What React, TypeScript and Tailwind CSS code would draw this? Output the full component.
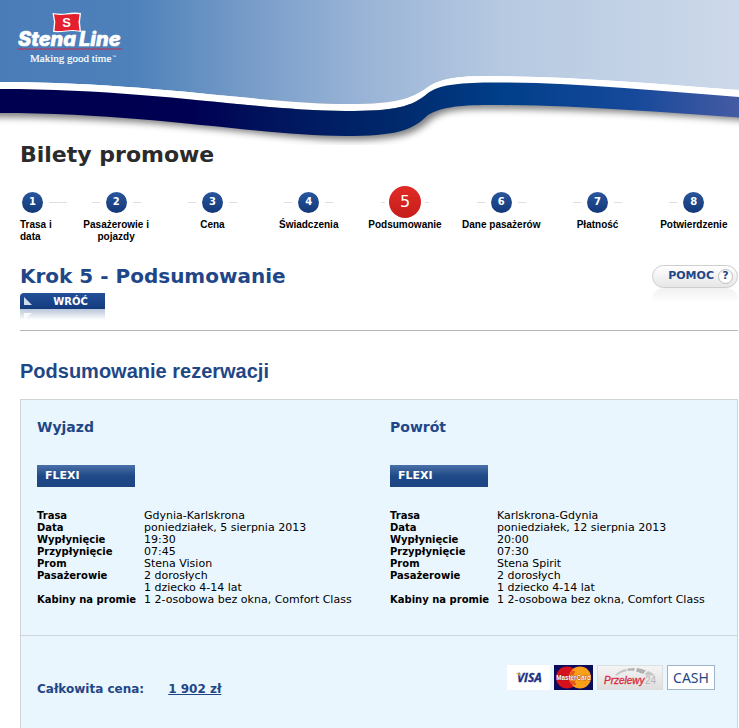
import clsx from 'clsx';

interface Step {
  label: string;
  active?: boolean;
}

interface Trip {
  title: string;
  fare: string;
  rows: [string, string[]][];
}

const steps: Step[] = [
  { label: 'Trasa i data' },
  { label: 'Pasażerowie i pojazdy' },
  { label: 'Cena' },
  { label: 'Świadczenia' },
  { label: 'Podsumowanie', active: true },
  { label: 'Dane pasażerów' },
  { label: 'Płatność' },
  { label: 'Potwierdzenie' },
];

const trips: Trip[] = [
  {
    title: 'Wyjazd',
    fare: 'FLEXI',
    rows: [
      ['Trasa', ['Gdynia-Karlskrona']],
      ['Data', ['poniedziałek, 5 sierpnia 2013']],
      ['Wypłynięcie', ['19:30']],
      ['Przypłynięcie', ['07:45']],
      ['Prom', ['Stena Vision']],
      ['Pasażerowie', ['2 dorosłych', '1 dziecko 4-14 lat']],
      ['Kabiny na promie', ['1 2-osobowa bez okna, Comfort Class']],
    ],
  },
  {
    title: 'Powrót',
    fare: 'FLEXI',
    rows: [
      ['Trasa', ['Karlskrona-Gdynia']],
      ['Data', ['poniedziałek, 12 sierpnia 2013']],
      ['Wypłynięcie', ['20:00']],
      ['Przypłynięcie', ['07:30']],
      ['Prom', ['Stena Spirit']],
      ['Pasażerowie', ['2 dorosłych', '1 dziecko 4-14 lat']],
      ['Kabiny na promie', ['1 2-osobowa bez okna, Comfort Class']],
    ],
  },
];

const Logo = () => (
  <svg className="absolute left-4 top-3 h-14 w-[112px]" viewBox="16 12 112 56" role="img" aria-label="Stena Line">
    <path d="M52.500 13Q60 14.500 67 13.300T81 13L80 22L81 32Q73 30.500 66 31.500T53 32L54 22Z" fill="#fff" />
    <path d="M54 14.300Q60 15.500 67 14.500T79.500 14.300L78.500 22L79.500 30.700Q73 29.500 66 30.500T54.500 30.700L55.300 22Z" fill="#e5202e" />
    <text x="66.500" y="27" textAnchor="middle" fontSize="13" fontWeight="bold" fill="#fff" fontFamily="'Liberation Sans', Arial, sans-serif">S</text>
    <text x="18" y="46" fontSize="20" fontWeight="800" fontStyle="italic" fill="#fff" stroke="#fff" strokeWidth="0.6" fontFamily="'Inter', sans-serif">Stena</text>
    <text x="79" y="46" fontSize="20" fontWeight="800" fontStyle="italic" fill="#fff" stroke="#fff" strokeWidth="0.6" fontFamily="'Inter', sans-serif">Line</text>
    <rect x="18" y="48.500" width="104" height="1" fill="#c8284a" />
    <text x="30" y="62" fontSize="11" fill="#fff" stroke="#fff" strokeWidth="0.2" fontFamily="'Liberation Serif', 'Times New Roman', serif">Making good time</text>
    <text x="112" y="58" fontSize="4" fill="#fff" fontFamily="'Liberation Sans', Arial, sans-serif">™</text>
  </svg>
);

const Header = () => (
  <header className="relative h-[145px]">
    <svg className="h-full w-full" viewBox="0 0 739 145" preserveAspectRatio="none" aria-hidden="true">
      <defs>
        <linearGradient id="sky">
          <stop offset="0" stopColor="#4a7db8" />
          <stop offset="0.18" stopColor="#4e81ba" />
          <stop offset="0.34" stopColor="#789dc9" />
          <stop offset="0.5" stopColor="#9bb5d7" />
          <stop offset="0.68" stopColor="#b6c9e1" />
          <stop offset="1" stopColor="#cdd9ea" />
        </linearGradient>
        <linearGradient id="ribbon">
          <stop offset="0" stopColor="#000050" />
          <stop offset="0.26" stopColor="#000052" />
          <stop offset="0.36" stopColor="#00135c" />
          <stop offset="0.54" stopColor="#002a6c" />
          <stop offset="0.68" stopColor="#003f8a" />
          <stop offset="0.86" stopColor="#17499b" />
          <stop offset="1" stopColor="#455ba3" />
        </linearGradient>
        <filter id="soft" x="-5%" y="-20%" width="110%" height="140%">
          <feGaussianBlur stdDeviation="3.5" />
        </filter>
      </defs>
      <path
        d="M-20 100H760V122C690 115 570 109 495 109C455 109 442 110 428 122C412 138 385 140 345 140C270 139 170 117 -20 117Z"
        fill="#000"
        opacity="0.5"
        filter="url(#soft)"
      />
      <path
        d="M0 0H739V90C660 84 570 76 490 76C455 76 440 79 428 87C412 99 395 104 350 104C260 104 150 82 0 82Z"
        fill="url(#sky)"
      />
      <path
        d="M0 82C150 82 260 104 350 104C395 104 412 99 428 87C440 79 455 76 490 76C570 76 660 84 739 90V98C660 91 570 83 490 83C455 84 440 85 428 93C412 107 395 111 345 111C260 111 150 89 0 89Z"
        fill="#fff"
      />
      <path
        d="M0 89C150 89 260 111 345 111C395 111 412 107 428 93C440 85 455 83 490 82.500C570 82 660 91 739 97V117.500C660 112 570 105 490 105C455 105 440 108 428 115C412 131 395 136 345 136C260 136 150 113 0 113Z"
        fill="url(#ribbon)"
      />
    </svg>
    <Logo />
  </header>
);

const Steps = () => (
  <ol className="-mr-1 mt-[17px] flex">
    {steps.map(({ label, active }, i) => (
      <li
        key={label}
        className={clsx(
          "flex flex-col text-[10px] leading-3 font-bold text-black font-['Liberation_Sans',Arial,sans-serif]",
          i === 0 ? 'w-12 items-start' : 'flex-1 items-center text-center'
        )}
      >
        <div className={clsx('flex h-8 items-center', active ? 'gap-1' : 'gap-1.5', i === 0 && 'pl-0.5')}>
          {i > 0 && <span className={clsx('h-px bg-[#dfdfdf]', active ? 'w-1' : 'w-2')} />}
          <span
            className={clsx(
              "flex items-center justify-center rounded-full text-white font-['DejaVu_Sans',Verdana,sans-serif]",
              active
                ? 'size-8 bg-linear-to-b from-[#e22a25] to-[#c41f1c] text-base font-normal'
                : 'size-[21px] bg-linear-to-b from-[#2a569c] to-[#123878] text-[10px]'
            )}
          >
            {i + 1}
          </span>
          <span
            className={clsx(
              'h-px',
              i < steps.length - 1 && 'bg-[#dfdfdf]',
              i === 0 ? 'w-[18px]' : active ? 'w-1' : 'w-2'
            )}
          />
        </div>
        <span className={clsx('mt-px', i === 0 ? 'w-9' : 'max-w-20')}>{label}</span>
      </li>
    ))}
  </ol>
);

const TripDetails = ({ title, fare, rows }: Trip) => (
  <section>
    <h3 className="text-sm leading-5 font-bold text-[#1f4788]">{title}</h3>
    <div className="mt-7 flex h-[22px] w-[98px] items-center bg-linear-to-b from-[#4a70a8] via-[#1f4a87] via-50% to-[#1c4582] pl-2 text-[11px] font-bold text-white">
      {fare}
    </div>
    <table className="mt-[23px] w-full text-left text-[11px] leading-3 text-black">
      <tbody>
        {rows.map(([name, values]) => (
          <tr key={name} className="align-top">
            <th scope="row" className="w-[107px] p-0 text-[10px] leading-3 font-bold whitespace-nowrap">{name}</th>
            <td className="p-0 whitespace-nowrap">
              {values.map((value) => (
                <div key={value}>{value}</div>
              ))}
            </td>
          </tr>
        ))}
      </tbody>
    </table>
  </section>
);

const Payments = () => (
  <div className="flex gap-1">
    <svg className="h-[25px] w-[43px]" viewBox="0 0 43 25" role="img" aria-label="Visa">
      <rect width="43" height="25" fill="#fff" />
      <text x="10" y="17" fontSize="12" fontWeight="bold" fontStyle="italic" fill="#1c2f86" stroke="#1c2f86" strokeWidth="0.3" fontFamily="'Open Sans', sans-serif">VISA</text>
      <path d="M8.500 8H12.500L13.500 12Q11.500 9 8.500 8Z" fill="#e8a325" />
    </svg>
    <svg className="h-[25px] w-[39px]" viewBox="0 0 39 25" role="img" aria-label="MasterCard">
      <rect width="39" height="25" fill="#0b0b5c" />
      <circle cx="13" cy="12.500" r="11" fill="#d3101c" />
      <circle cx="26" cy="12.500" r="11" fill="#f9a01b" />
      <path d="M17 7H21M16 9H20M16 17H21M17 19H22" stroke="#d3101c" />
      <text x="19.500" y="15" textAnchor="middle" fontSize="6.300" fontWeight="bold" fill="#fff" stroke="#7a1010" strokeWidth="0.6" paintOrder="stroke" fontFamily="'Liberation Sans', Arial, sans-serif">MasterCard</text>
    </svg>
    <svg className="h-[25px] w-[66px]" viewBox="0 0 66 25" role="img" aria-label="Przelewy24">
      <defs>
        <linearGradient id="silver" x2="0" y2="1">
          <stop offset="0" stopColor="#f5f5f5" />
          <stop offset="1" stopColor="#dedede" />
        </linearGradient>
      </defs>
      <rect x="0.500" y="0.500" width="65" height="24" fill="url(#silver)" stroke="#dcdfe0" />
      <path d="M18 10Q23 5 29 4L30 6Q24 7 20 10.500Z" fill="#c4c4c4" />
      <path d="M30 3.800Q34 2.800 38 3L37 6Q34 5.500 31 6Z" fill="#b8b8b8" />
      <path d="M40 3Q45 3.500 49 5.500L46 9Q42 7 39 6.500Z" fill="#b0b0b0" />
      <path d="M51 6Q56 8 58 10.500H49Q48.500 9.500 48 9Z" fill="#c4c4c4" />
      <text x="7" y="19" fontSize="10" fontStyle="italic" fill="#d9283c" stroke="#d9283c" strokeWidth="0.3" fontFamily="'Liberation Sans', Arial, sans-serif">Przelewy</text>
      <text x="48" y="19" fontSize="10" fill="#b5b5b5" fontFamily="'Liberation Sans', Arial, sans-serif">24</text>
    </svg>
    <span className="flex h-[25px] w-12 items-center justify-center border border-[#9fb3cc] bg-white text-sm text-[#1f4788] font-['Noto_Sans',sans-serif]">
      CASH
    </span>
  </div>
);

export default function App() {
  return (
    <div className="flex min-h-screen flex-col overflow-x-hidden bg-white font-['DejaVu_Sans',Verdana,sans-serif]">
      <Header />
      <main className="mr-px ml-5 -mt-1 flex flex-1 flex-col">
        <h1 className="text-[22px] leading-7 font-bold text-[#2b2b2b]">Bilety promowe</h1>
        <Steps />

        <div className="mt-[19px] flex items-start justify-between border-b border-[#b4b4b4] pb-2.5">
          <div>
            <h2 className="text-xl leading-7 font-bold text-[#1f4788]">Krok 5 - Podsumowanie</h2>
            <button
              type="button"
              className="mt-[3px] flex h-4 w-[85px] items-center rounded-tl bg-linear-to-b from-[#24509a] to-[#133a7c] pl-1 text-[10px] font-bold text-white"
            >
              <svg className="size-2" viewBox="0 0 8 8" aria-hidden="true">
                <path d="M0 0L8 8H0Z" fill="#cfdcf0" />
              </svg>
              <span className="flex-1 pl-1">WRÓĆ</span>
            </button>
            <svg className="h-[11px] w-[85px]" viewBox="0 0 85 11" aria-hidden="true">
              <defs>
                <linearGradient id="mirror" x2="0" y2="1">
                  <stop offset="0" stopColor="#b9c5da" />
                  <stop offset="1" stopColor="#fff" />
                </linearGradient>
              </defs>
              <rect width="85" height="11" fill="url(#mirror)" />
              <path d="M4 4H12L4 11Z" fill="#fff" opacity="0.8" />
            </svg>
          </div>
          <div className="mt-[3px]">
            <button
              type="button"
              className="flex h-[23px] w-[86px] items-center justify-end gap-1 rounded-full border border-[#cdcdcd] bg-linear-to-b from-white to-[#e6e6e6] pr-1 text-[11px] font-bold text-[#1f4788]"
            >
              POMOC
              <span className="flex size-[15px] items-center justify-center rounded-full border border-[#bdbdbd] bg-white">?</span>
            </button>
            <div className="h-3.5 rounded-t-xl bg-linear-to-b from-[#f0f0f0] to-white" />
          </div>
        </div>

        <h2 className="mt-7 text-xl leading-6 font-bold text-[#1f4788] font-['Liberation_Sans',Arial,sans-serif]">
          Podsumowanie rezerwacji
        </h2>

        <div className="mt-4 flex-1 border border-b-0 border-[#cfd4d7] bg-[#eaf6fd]">
          <div className="grid grid-cols-2 gap-[22px] border-b border-[#cfd4d7] px-4 pt-[17px] pb-[29px]">
            {trips.map((trip) => (
              <TripDetails key={trip.title} {...trip} />
            ))}
          </div>
          <div className="flex items-start justify-between px-[22px] pt-[29px] pb-8 pl-4">
            <p className="mt-3.5 flex gap-6 text-xs leading-5 font-bold text-[#1f4788]">
              Całkowita cena:
              <a href="#cena" className="underline">1 902 zł</a>
            </p>
            <Payments />
          </div>
        </div>
      </main>
    </div>
  );
}
